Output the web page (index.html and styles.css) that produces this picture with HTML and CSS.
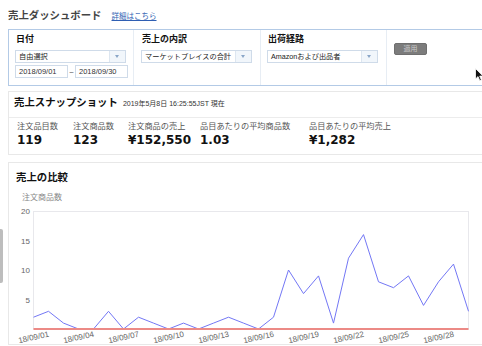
FILE: index.html
```html
<!DOCTYPE html>
<html lang="ja">
<head>
<meta charset="utf-8">
<title>売上ダッシュボード</title>
<link rel="stylesheet" href="styles.css">
</head>
<body>
<div class="page">
  <header class="top">
    <h1 class="title">売上ダッシュボード</h1>
    <a class="more" href="#">詳細はこちら</a>
  </header>

  <section class="filters">
    <div class="fcol c1">
      <div class="flabel">日付</div>
      <div class="select"><span>自由選択</span><i class="arr"></i></div>
      <div class="daterow"><span class="inp">2018/09/01</span><span class="dash">–</span><span class="inp">2018/09/30</span></div>
    </div>
    <div class="fcol c2">
      <div class="flabel">売上の内訳</div>
      <div class="select"><span>マーケットプレイスの合計</span><i class="arr"></i></div>
    </div>
    <div class="fcol c3">
      <div class="flabel">出荷経路</div>
      <div class="select"><span>Amazonおよび出品者</span><i class="arr"></i></div>
    </div>
    <div class="fcol c4">
      <button class="apply" type="button">適用</button>
    </div>
  </section>

  <section class="card snap">
    <div class="snap-head">
      <h2 class="card-title">売上スナップショット</h2>
      <span class="stamp">2019年5月8日 16:25:55JST 現在</span>
    </div>
    <div class="metrics">
      <div class="metric"><div class="mlabel">注文品目数</div><div class="mval">119</div></div>
      <div class="metric"><div class="mlabel">注文商品数</div><div class="mval">123</div></div>
      <div class="metric"><div class="mlabel">注文商品の売上</div><div class="mval">¥152,550</div></div>
      <div class="metric"><div class="mlabel">品目あたりの平均商品数</div><div class="mval">1.03</div></div>
      <div class="metric"><div class="mlabel">品目あたりの平均売上</div><div class="mval">¥1,282</div></div>
    </div>
  </section>

  <section class="card compare">
    <h2 class="card-title">売上の比較</h2>
    <div class="ylabel">注文商品数</div>
    <svg class="chart" width="473" height="140" viewBox="9 205 473 140" xmlns="http://www.w3.org/2000/svg">
      <rect x="33.5" y="212.5" width="435" height="117.5" fill="none" stroke="#e8e8ec" stroke-width="1"/>
      <g font-size="8" fill="#666" text-anchor="end" font-family="Liberation Sans, sans-serif">
        <text x="30" y="215">20</text>
        <text x="30" y="244.5">15</text>
        <text x="30" y="274">10</text>
        <text x="30" y="303.5">5</text>
      </g>
      <polyline fill="none" stroke="#7377f5" stroke-width="1" stroke-linejoin="miter"
        points="33.5,318.2 48.5,312.3 63.5,324.1 78.5,330 93.5,330 108.5,312.3 123.5,330 138.5,318.2 153.5,324.1 168.5,330 183.5,324.1 198.5,330 213.5,324.1 228.5,318.2 243.5,324.1 258.5,330 273.5,318.2 288.5,271 303.5,294.6 318.5,276.9 333.5,324.1 348.5,259.2 363.5,235.6 378.5,282.8 393.5,288.7 408.5,276.9 423.5,306.4 438.5,282.8 453.5,265.1 468.5,312.3"/>
      <line x1="33.5" y1="330" x2="468.5" y2="330" stroke="#ec8a86" stroke-width="2"/>
      <g font-size="8" fill="#666" text-anchor="middle" font-family="Liberation Sans, sans-serif">
        <text x="33.5" y="341" transform="rotate(-12 33.5 338)">18/09/01</text>
        <text x="78.5" y="341" transform="rotate(-12 78.5 338)">18/09/04</text>
        <text x="123.5" y="341" transform="rotate(-12 123.5 338)">18/09/07</text>
        <text x="168.5" y="341" transform="rotate(-12 168.5 338)">18/09/10</text>
        <text x="213.5" y="341" transform="rotate(-12 213.5 338)">18/09/13</text>
        <text x="258.5" y="341" transform="rotate(-12 258.5 338)">18/09/16</text>
        <text x="303.5" y="341" transform="rotate(-12 303.5 338)">18/09/19</text>
        <text x="348.5" y="341" transform="rotate(-12 348.5 338)">18/09/22</text>
        <text x="393.5" y="341" transform="rotate(-12 393.5 338)">18/09/25</text>
        <text x="438.5" y="341" transform="rotate(-12 438.5 338)">18/09/28</text>
      </g>
    </svg>
  </section>
</div>

<div class="sidetab"></div>
<svg class="cursor" width="9" height="14" viewBox="0 0 9 14" xmlns="http://www.w3.org/2000/svg">
  <path d="M0.5 0.5 L0.5 11 L3 8.6 L4.8 12.8 L6.4 12.1 L4.7 8.1 L8 8.1 Z" fill="#111" stroke="#fff" stroke-width="0.8"/>
</svg>
</body>
</html>
```

FILE: styles.css
```css
html, body {
  margin: 0;
  padding: 0;
  background: #fff;
  overflow: hidden;
}

body {
  width: 482px;
  height: 346px;
  font-family: "Liberation Sans", "Noto Sans CJK JP", sans-serif;
  font-size: 8px;
  color: #222;
  position: relative;
}

.page {
  padding: 6px 0 0 8px;
}

/* header */
.top {
  display: flex;
  align-items: baseline;
  gap: 10px;
  height: 20px;
  margin-bottom: 3px;
}

.title {
  margin: 0;
  font-size: 10.4px;
  line-height: 20px;
  font-weight: 700;
  color: #444;
}

.more {
  font-size: 7.5px;
  color: #2f5fb3;
  text-decoration: underline;
}

/* filters */
.filters {
  display: flex;
  height: 55px;
  border: 1px solid #b3cae6;
  border-right: none;
  background: #fff;
}

.fcol {
  border-right: 1px solid #e7edf4;
  padding: 3px 0 0 6px;
}

.c1 { width: 118px; }
.c2 { width: 119px; padding-left: 7px; }
.c3 { width: 119px; }
.c4 { border-right: none; padding: 13px 0 0 7px; flex: 1; }

.flabel {
  font-size: 9px;
  line-height: 13px;
  font-weight: 700;
  color: #111;
  padding-left: 1px;
}

.select {
  display: flex;
  align-items: center;
  width: 109px;
  height: 11px;
  margin-top: 4px;
  border: 1px solid #cfdbe9;
  background: #fff;
  font-size: 7.2px;
  color: #222;
}

.select span {
  flex: 1;
  padding-left: 3px;
  white-space: nowrap;
  overflow: hidden;
  line-height: 11px;
}

.arr {
  width: 15px;
  height: 11px;
  flex: none;
  border-left: 1px solid #dde6f0;
  background: #f1f6fb;
  position: relative;
}

.arr::after {
  content: "";
  position: absolute;
  left: 5px;
  top: 4px;
  border-left: 2.5px solid transparent;
  border-right: 2.5px solid transparent;
  border-top: 3px solid #8aa6c8;
}

.daterow {
  display: flex;
  align-items: center;
  margin-top: 2px;
}

.inp {
  width: 48px;
  height: 11px;
  line-height: 11px;
  border: 1px solid #cfdbe9;
  padding-left: 3px;
  font-size: 7.5px;
  color: #333;
}

.dash {
  width: 7px;
  text-align: center;
  font-size: 7px;
  color: #444;
}

.apply {
  display: block;
  width: 33px;
  height: 12px;
  padding: 0;
  border: 1px solid #6f6f6f;
  border-radius: 2px;
  background: #7c7c7c;
  color: #c9c9c9;
  font-size: 7px;
  line-height: 10px;
  font-family: "Liberation Sans", "Noto Sans CJK JP", sans-serif;
}

/* cards */
.card {
  border: 1px solid #e8e8e8;
  border-right: none;
  background: #fff;
}

.snap {
  margin-top: 5px;
}

.snap-head {
  display: flex;
  align-items: baseline;
  gap: 5px;
  height: 25px;
  padding-left: 5px;
  border-bottom: 1px solid #ececec;
}

.card-title {
  margin: 0;
  font-size: 10.4px;
  line-height: 22px;
  font-weight: 700;
  color: #111;
}

.stamp {
  font-size: 7px;
  color: #333;
}

.metrics {
  display: grid;
  grid-template-columns: 56px 55px 72px 109px auto;
  height: 36px;
  padding: 3px 0 0 8px;
  box-sizing: border-box;
}

.mlabel {
  font-size: 8.2px;
  line-height: 12px;
  color: #555;
  white-space: nowrap;
}

.mval {
  font-family: "DejaVu Sans", "Liberation Sans", sans-serif;
  font-size: 12px;
  line-height: 15px;
  font-weight: 700;
  color: #111;
  white-space: nowrap;
}

.compare {
  margin-top: 7px;
  padding-top: 5px;
}

.compare .card-title {
  padding-left: 7px;
  line-height: 20px;
}

.ylabel {
  margin-top: 4px;
  padding-left: 13px;
  font-size: 8px;
  line-height: 12px;
  color: #888;
}

.chart {
  display: block;
}

/* overlays */
.sidetab {
  position: absolute;
  left: 0;
  top: 229px;
  width: 3px;
  height: 54px;
  background: #bdbdbd;
  border-radius: 0 2px 2px 0;
}

.cursor {
  position: absolute;
  left: 475px;
  top: 68px;
}
```
